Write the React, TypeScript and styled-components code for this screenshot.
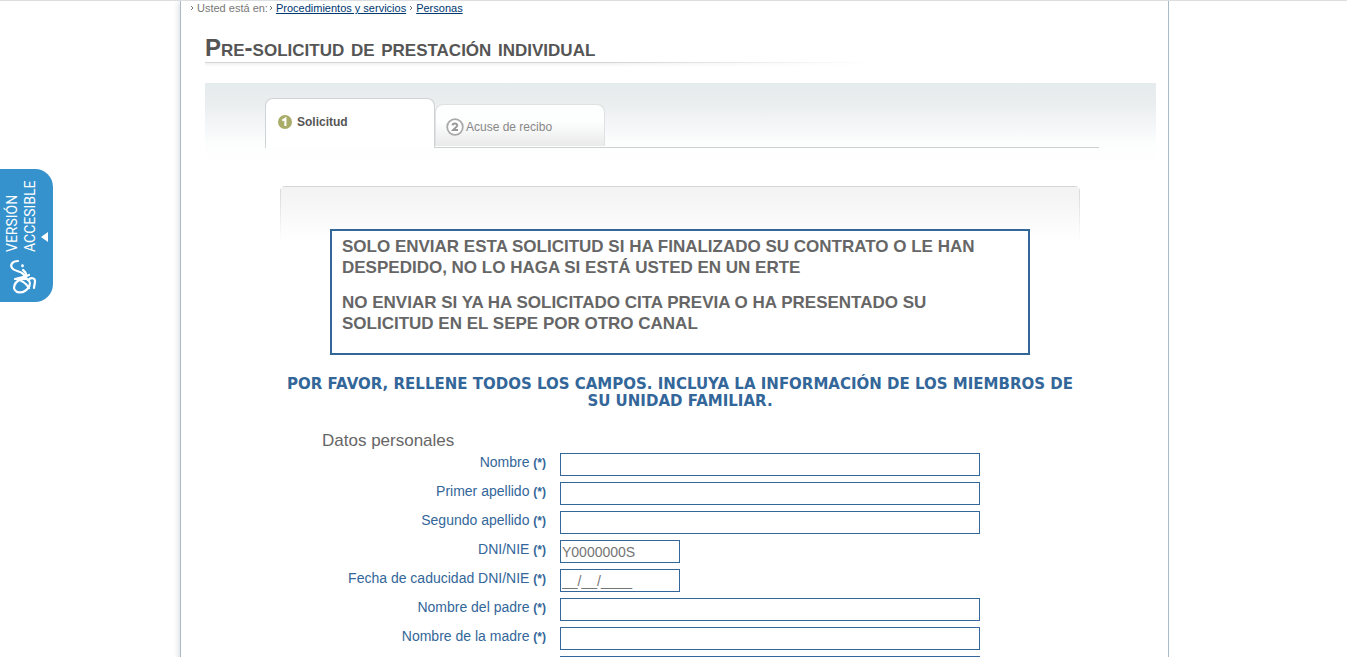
import React from "react";
import styled, { createGlobalStyle } from "styled-components";

const GlobalStyle = createGlobalStyle`
  * { box-sizing: border-box; }
  body {
    margin: 0;
    background: #fff;
    color: #666;
    font-family: "Liberation Sans", Arial, sans-serif;
    overflow: hidden;
  }
`;

const Viewport = styled.div`
  height: 100vh;
  overflow: hidden;
  border-top: 1px solid #dcdde1;
  padding-left: 2px;
`;

const Page = styled.div`
  max-width: 989px;
  min-height: 100vh;
  margin: 0 auto;
  border: solid #a9bac9;
  border-width: 0 1px;
  box-shadow: -3px 0 5px -1px #dfe2e6;
`;

const Breadcrumb = styled.nav`
  display: flex;
  align-items: center;
  height: 14px;
  padding-left: 9px;
  font-size: 11px;
  line-height: 14px;
  color: #777;
`;

const Crumb = styled.a`
  color: #003870;
  margin-right: 3px;
`;

const CrumbLabel = styled.span`
  margin-right: 1px;
`;

const ArrowSvg = styled.svg`
  flex: none;
  margin-right: 3px;
`;

const Main = styled.main`
  padding: 0 12px 0 24px;
`;

const Title = styled.h1`
  margin: 20px 0 2px;
  font-size: 24px;
  line-height: 25px;
  font-variant: small-caps;
  color: #555;
`;

const TitleRule = styled.div`
  width: 70%;
  height: 5px;
  border-top: 1px solid #d4d4d4;
  background: linear-gradient(#f1f1f1, #fff);
  mask-image: linear-gradient(90deg, #000 60%, transparent);
`;

const StepBand = styled.div`
  height: 77px;
  margin-top: 16px;
  padding: 15px 57px 0 60px;
  background: linear-gradient(#e6ebee, #e9edee 22%, #f3f4f6 50%, #fcfdfd 78%, #fff);
`;

const Steps = styled.ol`
  display: flex;
  align-items: flex-end;
  height: 50px;
  margin: 0;
  padding: 0;
  list-style: none;
  border-bottom: 1px solid #d0d0d0;
`;

const Step = styled.li<{ $active?: boolean }>`
  display: flex;
  align-items: center;
  gap: ${(p) => (p.$active ? 5 : 2)}px;
  width: 170px;
  height: ${(p) => (p.$active ? 50 : 42)}px;
  margin-bottom: ${(p) => (p.$active ? -1 : 1)}px;
  padding: ${(p) => (p.$active ? "0 0 4px 12px" : "3px 0 0 10px")};
  border: 1px solid ${(p) => (p.$active ? "#d0d3d5" : "#dfe1e2")};
  border-bottom: 0;
  border-radius: 8px 8px 0 0;
  background: ${(p) => (p.$active ? "#fff" : "linear-gradient(#fdfefe 40%, #eaeaea)")};
  color: ${(p) => (p.$active ? "#555" : "#888")};
  font-size: 12px;
  font-weight: ${(p) => (p.$active ? "bold" : "normal")};
`;

const FormPanel = styled.form`
  margin: 26px 76px 0 75px;
  padding-top: 43px;
  border-radius: 5px 5px 0 0;
  background:
    linear-gradient(#d6d6d6, #d6d6d6) 0 0 / 100% 1px no-repeat,
    linear-gradient(#d6d6d6, #fff) 0 0 / 1px 56px no-repeat,
    linear-gradient(#d6d6d6, #fff) 100% 0 / 1px 56px no-repeat,
    linear-gradient(#f2f2f2, #fff) 0 0 / 100% 56px no-repeat;
`;

const Notice = styled.section`
  height: 126px;
  margin: 0 50px;
  padding: 5px 10px;
  border: 2px solid #336699;
  background: #fff;
`;

const NoticeText = styled.p`
  margin: 0 0 14px;
  font-size: 17px;
  line-height: 21px;
  font-weight: bold;
`;

const Instructions = styled.h2`
  margin: 21px 5px 0;
  font-family: "DejaVu Sans", Verdana, sans-serif;
  font-size: 15px;
  line-height: 17px;
  text-align: center;
  color: #336699;
`;

const Fields = styled.fieldset`
  margin: 0;
  padding: 21px 0 0;
  border: 0;
`;

const Legend = styled.h3`
  margin: 0 0 2px 42px;
  font-size: 17px;
  line-height: 20px;
  font-weight: normal;
`;

const Row = styled.div`
  display: grid;
  grid-template-columns: 35% 1fr;
  height: 29px;
`;

const Label = styled.label`
  padding-right: 14px;
  font-size: 14px;
  line-height: 18px;
  text-align: right;
  color: #336699;
`;

const Required = styled.strong`
  font-size: 12px;
`;

const TextInput = styled.input<{ $short?: boolean }>`
  grid-column: 2;
  width: ${(p) => (p.$short ? 120 : 420)}px;
  max-width: 100%;
  height: 23px;
  padding: 1px;
  border: 1px solid #336699;
  border-radius: 0;
  background: #fff;
  font-family: inherit;
  font-size: 14px;
  &::placeholder { color: #757575; }
`;

const AccessibleTab = styled.a`
  position: fixed;
  left: 0;
  top: 169px;
  display: flex;
  flex-direction: column;
  gap: 5px;
  width: 53px;
  height: 133px;
  padding: 8px 0 0 3px;
  border-radius: 0 18px 18px 0;
  background: #3592cd;
  color: #fff;
  text-decoration: none;
`;

const TabRow = styled.span`
  display: flex;
  align-items: flex-end;
`;

const VerticalText = styled.span`
  writing-mode: vertical-rl;
  transform: rotate(180deg);
  height: 75px;
  font-family: Roboto, "Liberation Sans", sans-serif;
  font-size: 14px;
  line-height: 18px;
`;

const Pointer = styled.svg`
  margin: 0 0 10px 2px;
`;

const Logo = styled.svg`
  margin-left: 3px;
`;

const Arrow = () => (
  <ArrowSvg width="4" height="6" viewBox="0 0 4 6" aria-hidden="true">
    <path d="M1 1l2 2-2 2" fill="none" stroke="#777" />
  </ArrowSvg>
);

type Field = { id: string; label?: string; name?: string; short?: boolean; placeholder?: string };

const fields: Field[] = [
  { id: "nombre", label: "Nombre" },
  { id: "apellido1", label: "Primer apellido" },
  { id: "apellido2", label: "Segundo apellido" },
  { id: "dni", label: "DNI/NIE", short: true, placeholder: "Y0000000S" },
  { id: "caducidad", label: "Fecha de caducidad DNI/NIE", short: true, placeholder: "__/__/____" },
  { id: "padre", label: "Nombre del padre" },
  { id: "madre", label: "Nombre de la madre" },
  { id: "domicilio", name: "Domicilio" },
];

export default function App() {
  return (
    <Viewport>
      <GlobalStyle />
      <Page>
        <Breadcrumb aria-label="Usted está en">
          <Arrow />
          <CrumbLabel>Usted está en:</CrumbLabel>
          <Arrow />
          <Crumb href="#procedimientos">Procedimientos y servicios</Crumb>
          <Arrow />
          <Crumb href="#personas">Personas</Crumb>
        </Breadcrumb>
        <Main>
          <Title>Pre-solicitud de prestación individual</Title>
          <TitleRule />
          <StepBand>
            <Steps>
              <Step $active aria-current="step">
                <svg width="14" height="14" viewBox="0 0 14 14" aria-hidden="true">
                  <circle cx="7" cy="7" r="7" fill="#a9ad68" />
                  <path d="M4.3 5.6L7.4 3.6V11" fill="none" stroke="#fff" strokeWidth="2.1" />
                </svg>
                Solicitud
              </Step>
              <Step>
                <svg width="18" height="18" viewBox="0 0 18 18" aria-hidden="true">
                  <circle cx="9" cy="9" r="7.8" fill="#fff" stroke="#aaa" strokeWidth="1.8" />
                  <path d="M6.5 7.4C6.6 4.8 11.4 4.8 11.3 7.4 11.2 9.2 8.6 10 7 12H12" fill="none" stroke="#999" strokeWidth="1.9" />
                </svg>
                Acuse de recibo
              </Step>
            </Steps>
          </StepBand>
          <FormPanel>
            <Notice>
              <NoticeText>
                SOLO ENVIAR ESTA SOLICITUD SI HA FINALIZADO SU CONTRATO O LE HAN DESPEDIDO, NO LO HAGA SI ESTÁ USTED EN UN ERTE
              </NoticeText>
              <NoticeText>
                NO ENVIAR SI YA HA SOLICITADO CITA PREVIA O HA PRESENTADO SU SOLICITUD EN EL SEPE POR OTRO CANAL
              </NoticeText>
            </Notice>
            <Instructions>
              POR FAVOR, RELLENE TODOS LOS CAMPOS. INCLUYA LA INFORMACIÓN DE LOS MIEMBROS DE SU UNIDAD FAMILIAR.
            </Instructions>
            <Fields aria-labelledby="datos">
              <Legend id="datos">Datos personales</Legend>
              {fields.map((f) => (
                <Row key={f.id}>
                  {f.label && (
                    <Label htmlFor={f.id}>
                      {f.label} <Required>(*)</Required>
                    </Label>
                  )}
                  <TextInput id={f.id} $short={f.short} placeholder={f.placeholder} aria-label={f.name} />
                </Row>
              ))}
            </Fields>
          </FormPanel>
        </Main>
      </Page>
      <AccessibleTab href="#accesible">
        <TabRow>
          <VerticalText>
            VERSIÓN
            <br />
            ACCESIBLE
          </VerticalText>
          <Pointer width="7" height="10" viewBox="0 0 7 10" aria-hidden="true">
            <path d="M7 0v10L0 5z" fill="#fff" />
          </Pointer>
        </TabRow>
        <Logo width="34" height="40" viewBox="0 0 34 40" aria-hidden="true">
          <g fill="none" stroke="#fff" strokeWidth="2.2" strokeLinecap="round" strokeLinejoin="round">
            <path d="M12 4C6 4 4 8 6 11c2 3 7 3 10 5 3 2 3 4 2 6" />
            <path d="M16.500 8.500v.4" strokeWidth="2.600" />
            <path d="M17 13c3 2 4 5 3 9" />
            <ellipse cx="16" cy="28.500" rx="8.500" ry="6.200" transform="rotate(-32 16 28.500)" />
            <path d="M9 22c5-1 9-2 14-4M10 22c5 1 10 4 13 9M22 23c3-3 7-2 7 1 0 3-1 5-1 7" />
          </g>
        </Logo>
      </AccessibleTab>
    </Viewport>
  );
}
